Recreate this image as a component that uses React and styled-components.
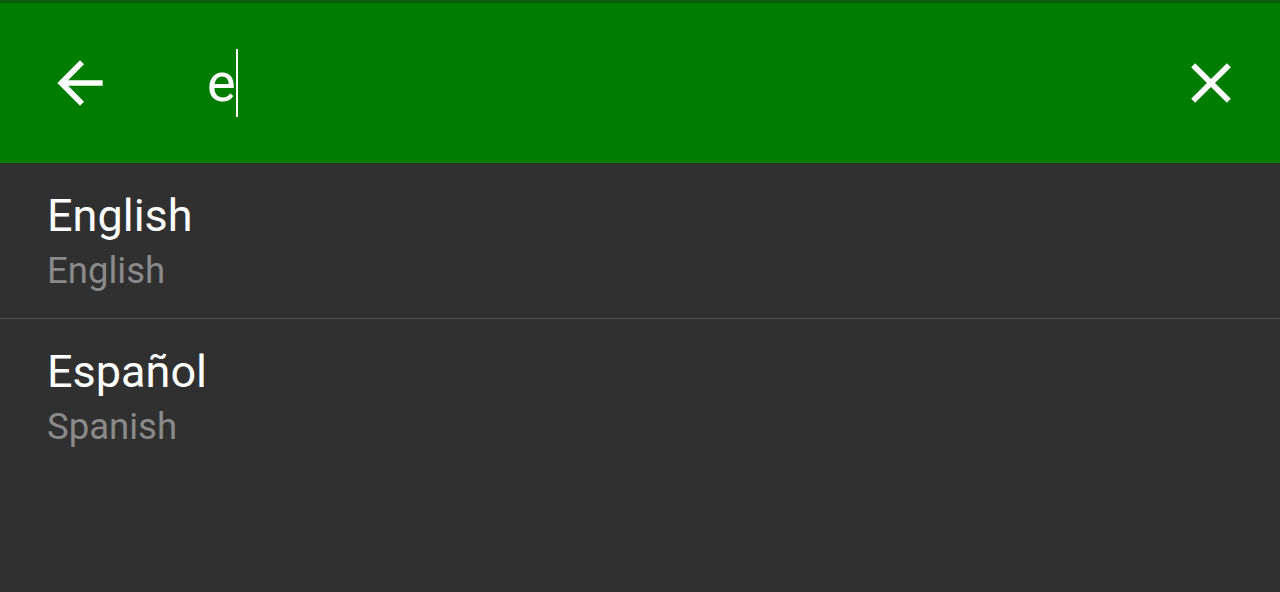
import React from 'react'
import styled, { createGlobalStyle } from 'styled-components'

const Global = createGlobalStyle`
  html, body {
    margin: 0;
    padding: 0;
    background: #303030;
    font-family: Roboto, "Noto Sans", "Liberation Sans", sans-serif;
  }
`

const Page = styled.div`
  width: 1280px;
  height: 592px;
  background: #303030;
  overflow: hidden;
`

const SearchBar = styled.header`
  height: 160px;
  border-top: 3px solid #0b5d0b;
  background: #007c00;
  display: flex;
  align-items: center;
  padding: 0 35px 0 46px;
  box-sizing: content-box;
`

const IconButton = styled.button`
  width: 68px;
  height: 68px;
  padding: 0;
  border: none;
  background: none;
  display: flex;
  align-items: center;
  justify-content: center;
  svg {
    width: 68px;
    height: 68px;
    fill: #ffffff;
  }
`

const Query = styled.div`
  flex: 1;
  margin-left: 93px;
  display: flex;
  align-items: center;
  color: #ffffff;
  font-size: 54px;
  line-height: 68px;
`

const Caret = styled.span`
  display: inline-block;
  width: 2px;
  height: 68px;
  background: #ffffff;
  margin-left: 0;
`

const List = styled.ul`
  list-style: none;
  margin: 0;
  padding: 0;
`

const Item = styled.li`
  padding: 27px 47px;
  border-bottom: ${p => (p.last ? 'none' : '1px solid #555555')};
`

const Title = styled.div`
  font-size: 45px;
  line-height: 52px;
  color: #ffffff;
`

const Subtitle = styled.div`
  margin-top: 9px;
  font-size: 36.5px;
  line-height: 40px;
  color: #8a8a8a;
`

const BackIcon = () => (
  <svg viewBox="0 0 24 24">
    <path d="M20 11H7.83l5.59-5.59L12 4l-8 8 8 8 1.41-1.41L7.83 13H20v-2z" />
  </svg>
)

const CloseIcon = () => (
  <svg viewBox="0 0 24 24">
    <path d="M19 6.41L17.59 5 12 10.59 6.41 5 5 6.41 10.59 12 5 17.59 6.41 19 12 13.41 17.59 19 19 17.59 13.41 12z" />
  </svg>
)

const languages = [
  { name: 'English', label: 'English' },
  { name: 'Español', label: 'Spanish' },
]

const App = () => (
  <Page>
    <Global />
    <SearchBar>
      <IconButton><BackIcon /></IconButton>
      <Query>
        e<Caret />
      </Query>
      <IconButton><CloseIcon /></IconButton>
    </SearchBar>
    <List>
      {languages.map((l, i) => (
        <Item key={l.name} last={i === languages.length - 1}>
          <Title>{l.name}</Title>
          <Subtitle>{l.label}</Subtitle>
        </Item>
      ))}
    </List>
  </Page>
)

export default App
